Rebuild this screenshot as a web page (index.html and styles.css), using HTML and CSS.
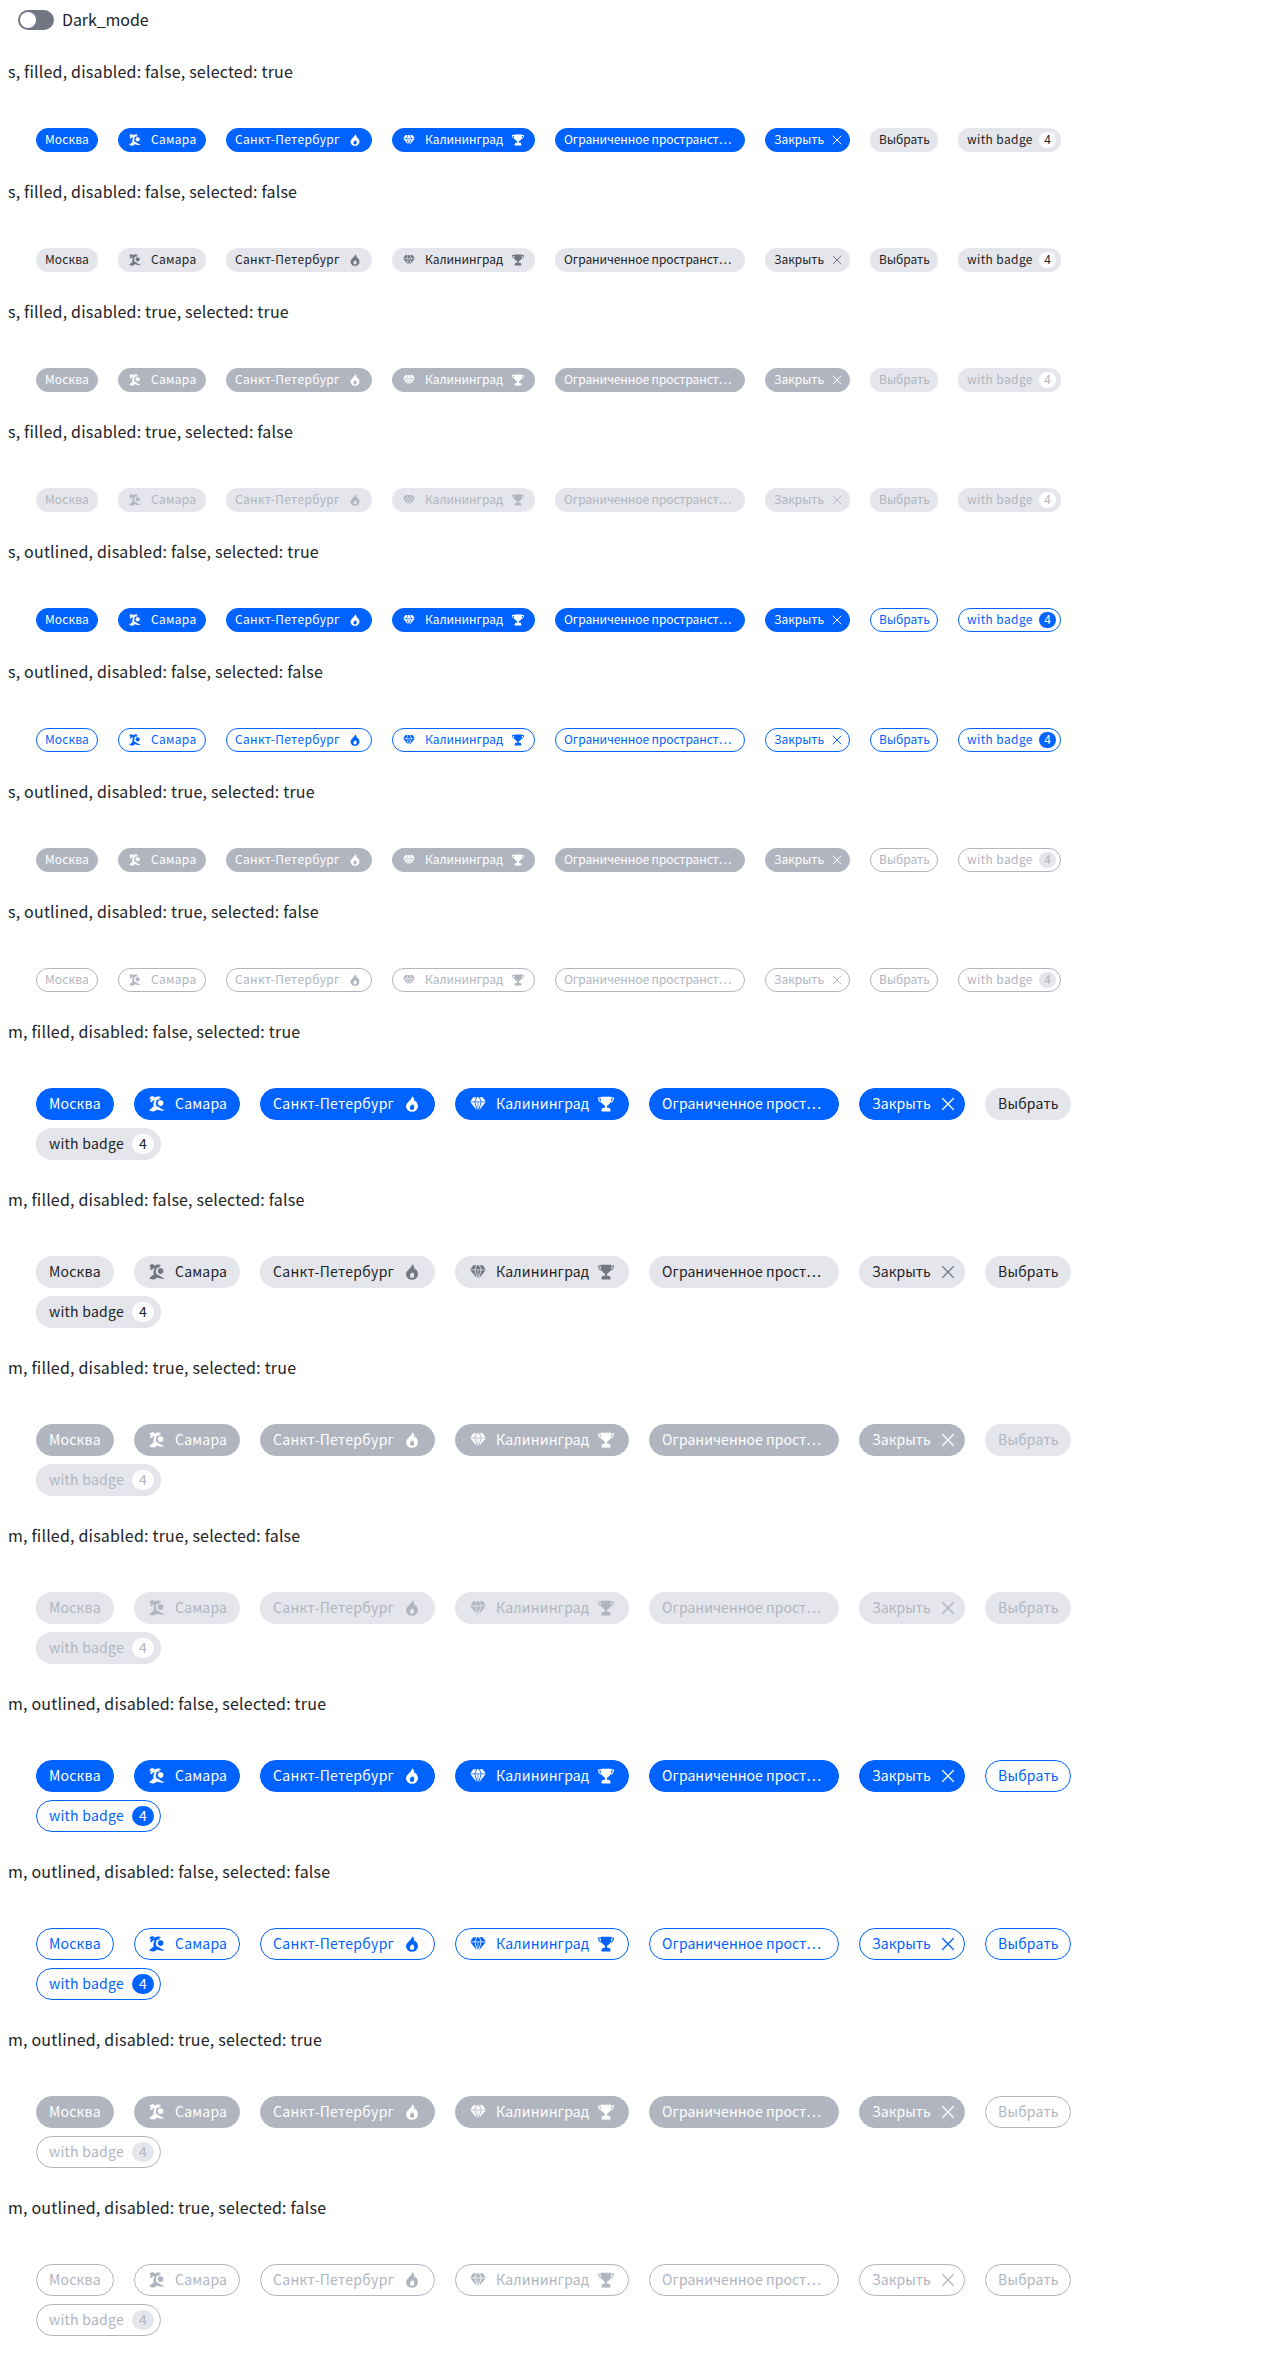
FILE: index.html
```html
<!DOCTYPE html>
<html lang="ru">
<head>
<meta charset="utf-8">
<title>Chips</title>
<link rel="stylesheet" href="styles.css">
</head>
<body>
<svg class="sprite" aria-hidden="true">
  <symbol id="palm" viewBox="0 0 16 16">
    <path d="M.8 1.300C2.200-.1 4.600.1 5.900 1.700 7.600.1 10.600 0 12.200 1.700L10 2.100 11 3.700 8.200 3.400C6.700 5.300 6.600 8 7.400 10.300 9 10.600 10 11.400 11.100 12.200 12.600 13.200 13.800 13.300 15.600 14.300 13.600 15 11.400 14.700 9.500 13.900 7.200 13 6.600 15.600 3.800 15.500 2.200 15.400 1.300 14.700.1 14.500 1.700 13.500 2.300 11.800 4.600 10.800 4.300 8.600 4.600 6 5.700 4 4.600 4.300 3.200 5 2.700 6.300L.9 5.400 2.300 3.300.9 3.200Z"/>
    <circle cx="11.600" cy="7.100" r="2.800"/>
  </symbol>
  <symbol id="fire" viewBox="0 0 16 16">
    <path fill-rule="evenodd" d="M8.300.3C8 2.300 6.500 3.700 5 5.200 3.200 6.900 2 8.500 2 10.300A6 5.500 0 0 0 14 10.300C14 8 12.800 6.200 11.300 4.700 11.100 5.300 10.900 5.700 10.500 6 10.500 3.900 9.900 1.400 8.300.3ZM8.500 8C9.700 9 10.200 10 10.200 11.500 10.200 13 9.300 14 8.100 14S5.900 13 5.900 11.700C5.900 10.600 6.600 9.700 7.200 9.100L7.700 9.600C8.200 9.200 8.400 8.700 8.500 8Z"/>
  </symbol>
  <symbol id="gem" viewBox="0 0 16 16">
    <path d="M3.300 1.200H6.200L4.500 5.500H.2ZM7.100 1.200H8.900L10.700 5.500H5.300ZM9.800 1.200H12.700L15.800 5.500H11.500ZM.4 6.300H4.500L6.700 14ZM5.300 6.300H7.700V14.200ZM8.300 6.300H10.700L8.300 14.200ZM11.500 6.300H15.600L9.300 14Z"/>
  </symbol>
  <symbol id="cup" viewBox="0 0 16 16">
    <path fill-rule="evenodd" d="M2.800.8H13.200V1.400H16C16 4.300 15 6.300 12.400 6.600 11.400 8.500 10 9.300 9 9.700V11.700H10.700Q12.100 11.800 12.100 13.200H12.500V15.400H3.500V13.200H3.900Q3.900 11.800 5.300 11.700H7V9.700C6 9.300 4.600 8.500 3.600 6.600 1 6.300 0 4.300 0 1.400H2.800ZM1.200 2.500C1.300 4 1.900 5.200 3.100 5.500Q2.700 4.100 2.800 2.500ZM14.800 2.500H13.200Q13.300 4.100 12.900 5.500C14.100 5.200 14.700 4 14.800 2.500Z"/>
  </symbol>
  <symbol id="cross" viewBox="0 0 16 16">
    <path d="M2.300 2.300 13.700 13.700M13.700 2.300 2.300 13.700" fill="none" stroke="currentColor" stroke-width="1.300"/>
  </symbol>
</svg>
<label class="theme"><span class="switch"></span><span class="label">Dark_mode</span></label>
<main id="states"></main>
<script src="chips.js"></script>
</body>
</html>
```
FILE: styles.css
```css
* { box-sizing: border-box; }
body {
  margin: 0;
  padding: 8px;
  background: #fff;
  color: #212327;
  font: 16px/24px "Noto Sans CJK SC", "Noto Sans", sans-serif;
}
.sprite { display: none; }
.theme { display: flex; align-items: center; gap: 8px; height: 24px; padding-left: 10px; }
.switch {
  width: 36px; height: 20px; padding: 2px;
  border-radius: 10px; background: #717681;
}
.switch::before { content: ""; display: block; width: 16px; height: 16px; border-radius: 50%; background: #fff; }
.title { height: 24px; margin: 28px 0 0; font-size: 16px; line-height: 22px; font-weight: 400; letter-spacing: .19px; white-space: nowrap; }
.row { display: flex; flex-wrap: wrap; gap: 8px 20px; width: 1080px; padding: 44px 0 0 28px; }
.chip {
  display: flex; align-items: center;
  border: 1px solid transparent; border-radius: 16px;
  line-height: 20px; white-space: nowrap;
}
.label { flex: none; padding-bottom: 2px; }
.theme .label { letter-spacing: -.08px; }
.icon { flex: none; fill: currentColor; }
.badge { display: flex; align-items: center; justify-content: center; margin-left: auto; padding-bottom: 2px; border-radius: 12px; letter-spacing: 0; }

.s .chip { height: 24px; padding: 0 8px; font-size: 12px; }
.s .icon { width: 12px; height: 12px; margin: 0 2px; }
.s .badge { width: 17px; height: 16px; margin-right: -4px; }
.m .chip { height: 32px; padding: 0 12px; font-size: 14px; letter-spacing: .2px; }
.m .icon { width: 16px; height: 16px; margin: 0 2px; }
.m .badge { width: 22px; height: 20px; margin-right: -6px; }
.row .before { margin-right: 10px; }
.row .after { margin-left: auto; }
.s .cross { margin-right: -2px; }
.m .cross { margin-right: -4px; }

.s .moscow { width: 62px; letter-spacing: .1px; }
.s .samara { width: 88px; letter-spacing: .3px; }
.s .spb { width: 146px; letter-spacing: .32px; }
.s .kgd { width: 143px; letter-spacing: -.05px; }
.s .clip { width: 190px; letter-spacing: -.09px; }
.s .close { width: 85px; }
.s .pick { width: 68px; }
.s .count { width: 103px; letter-spacing: .38px; }
.m .moscow { width: 78px; }
.m .samara { width: 106px; }
.m .spb { width: 175px; letter-spacing: .31px; }
.m .kgd { width: 174px; letter-spacing: .15px; }
.m .clip { width: 190px; letter-spacing: .04px; }
.m .close { width: 106px; letter-spacing: .05px; }
.m .pick { width: 86px; }
.m .count { width: 125px; letter-spacing: .25px; }

.filled .chip { background: #e5e6eb; }
.filled .icon { color: #717681; }
.filled .badge { background: #fff; }
.outlined .chip { border-color: #0062ff; color: #0062ff; }
.outlined .badge { background: #0062ff; color: #fff; }
.disabled.filled .chip, .disabled.filled .icon { color: #b0b5bf; }
.disabled.outlined .chip { border-color: #b0b5bf; color: #b0b5bf; }
.disabled.outlined .badge { background: #e5e6eb; color: #b0b5bf; }
.row .chip.on, .row .chip.on .icon { color: #fff; }
.row .chip.on { background: #0062ff; border-color: #0062ff; }
.disabled.row .chip.on { background: #b0b5bf; border-color: #b0b5bf; color: #fff; }
.disabled.row .chip.on .icon { color: #fff; }
```
FILE: chips.js
```js
const chips = [
  { name: 'moscow', text: 'Москва' },
  { name: 'samara', text: 'Самара', before: 'palm' },
  { name: 'spb', text: 'Санкт-Петербург', after: 'fire' },
  { name: 'kgd', text: 'Калининград', before: 'gem', after: 'cup' },
  { name: 'clip', text: { s: 'Ограниченное пространст…', m: 'Ограниченное прост…' } },
  { name: 'close', text: 'Закрыть', after: 'cross' },
  { name: 'pick', text: 'Выбрать', plain: true },
  { name: 'count', text: 'with badge', badge: 4, plain: true },
];

const icon = (id, side) => id ? `<svg class="icon ${side} ${id}"><use href="#${id}"/></svg>` : '';

const chip = (c, size, selected) => `<div class="chip ${c.name}${selected && !c.plain ? ' on' : ''}">`
  + icon(c.before, 'before') + `<span class="label">${c.text[size] || c.text}</span>` + icon(c.after, 'after')
  + (c.badge ? `<span class="badge">${c.badge}</span>` : '') + '</div>';

let html = '';
for (const size of ['s', 'm'])
  for (const view of ['filled', 'outlined'])
    for (const disabled of [false, true])
      for (const selected of [true, false])
        html += `<section class="state"><h2 class="title">${size}, ${view}, disabled: ${disabled}, selected: ${selected}</h2>`
          + `<div class="row ${size} ${view}${disabled ? ' disabled' : ''}">`
          + chips.map(c => chip(c, size, selected)).join('') + '</div></section>';
document.getElementById('states').innerHTML = html;
```
